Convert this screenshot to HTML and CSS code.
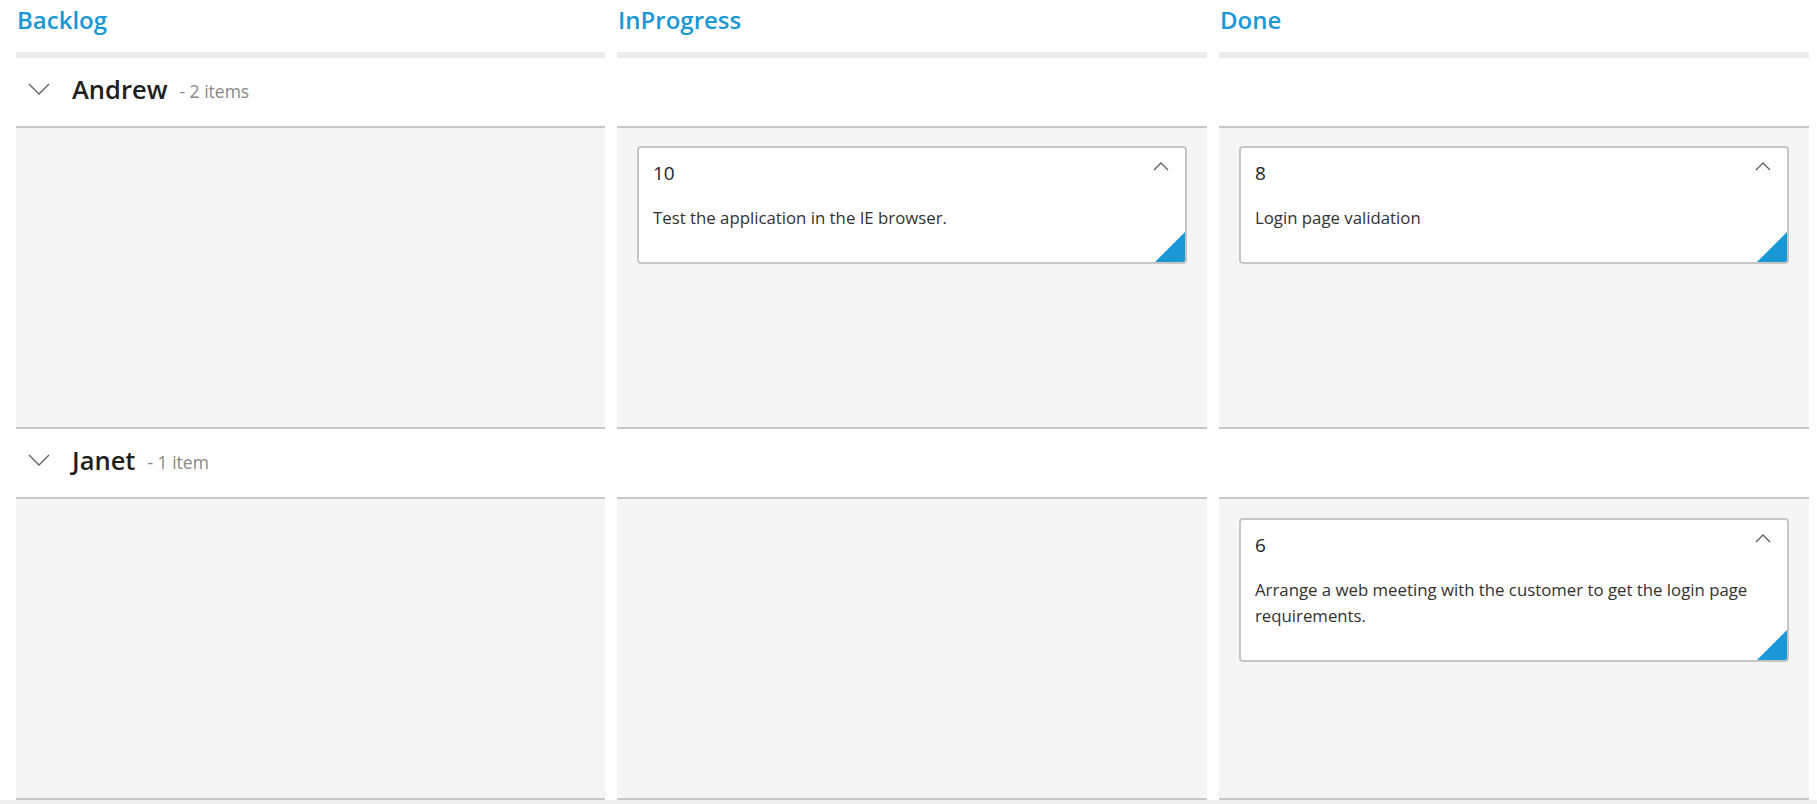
FILE: index.html
```html
<!DOCTYPE html>
<html>
<head>
<meta charset="utf-8">
<link rel="stylesheet" href="styles.css">
</head>
<body>
<div class="board">
  <div class="row col-headers">
    <div class="col-title">Backlog</div>
    <div class="col-title">InProgress</div>
    <div class="col-title">Done</div>
  </div>

  <div class="row lane-head">
    <div class="lane-cell lane-first">
      <svg class="lane-chevron" width="22" height="12" viewBox="0 0 22 12"><polyline points="1,1 11,11 21,1" fill="none" stroke="#605e5c" stroke-width="1.3"/></svg>
      <span class="lane-name">Andrew</span>
      <span class="lane-count">- 2 items</span>
    </div>
    <div class="lane-cell"></div>
    <div class="lane-cell"></div>
  </div>
  <div class="row lane-body body-1">
    <div class="body-cell"></div>
    <div class="body-cell">
      <div class="card">
        <div class="card-head">
          <span class="card-id">10</span>
          <svg class="card-chevron" width="16" height="9" viewBox="0 0 16 9"><polyline points="1,8 8,1 15,8" fill="none" stroke="#605e5c" stroke-width="1.3"/></svg>
        </div>
        <div class="card-text">Test the application in the IE browser.</div>
      </div>
    </div>
    <div class="body-cell">
      <div class="card">
        <div class="card-head">
          <span class="card-id">8</span>
          <svg class="card-chevron" width="16" height="9" viewBox="0 0 16 9"><polyline points="1,8 8,1 15,8" fill="none" stroke="#605e5c" stroke-width="1.3"/></svg>
        </div>
        <div class="card-text">Login page validation</div>
      </div>
    </div>
  </div>

  <div class="row lane-head">
    <div class="lane-cell lane-first">
      <svg class="lane-chevron" width="22" height="12" viewBox="0 0 22 12"><polyline points="1,1 11,11 21,1" fill="none" stroke="#605e5c" stroke-width="1.3"/></svg>
      <span class="lane-name">Janet</span>
      <span class="lane-count">- 1 item</span>
    </div>
    <div class="lane-cell"></div>
    <div class="lane-cell"></div>
  </div>
  <div class="row lane-body body-2">
    <div class="body-cell"></div>
    <div class="body-cell"></div>
    <div class="body-cell">
      <div class="card">
        <div class="card-head">
          <span class="card-id">6</span>
          <svg class="card-chevron" width="16" height="9" viewBox="0 0 16 9"><polyline points="1,8 8,1 15,8" fill="none" stroke="#605e5c" stroke-width="1.3"/></svg>
        </div>
        <div class="card-text">Arrange a web meeting with the customer to get the login page requirements.</div>
      </div>
    </div>
  </div>
</div>
<div class="bottom-strip"></div>
</body>
</html>
```
FILE: styles.css
```css
html, body {
  margin: 0;
  padding: 0;
  background: #ffffff;
  font-family: "Open Sans", "Noto Sans", sans-serif;
  color: #201f1e;
  overflow: hidden;
}
.board {
  padding-left: 16px;
}
.row {
  display: grid;
  grid-template-columns: 589px 590px 590px;
  column-gap: 12px;
}
.col-title {
  height: 52px;
  line-height: 40px;
  font-size: 24px;
  font-weight: 600;
  color: #1a97d5;
  padding-left: 1px;
  border-bottom: 6px solid #ececec;
  box-sizing: content-box;
}
.lane-cell {
  height: 68px;
  border-bottom: 2px solid #c8c8c8;
  background: #ffffff;
}
.lane-first {
  display: flex;
  align-items: center;
}
.lane-chevron {
  margin-left: 12px;
  margin-top: -6px;
  flex: none;
}
.lane-name {
  margin-left: 22px;
  font-size: 25.5px;
  font-weight: 550;
  color: #201f1e;
  margin-top: -7px;
}
.lane-count {
  margin-left: 12px;
  font-size: 17.5px;
  color: #8a8886;
  margin-top: -3px;
}
.body-cell {
  background: #f5f5f5;
  border-bottom: 2px solid #c8c8c8;
  padding: 18px 20px 0 20px;
  height: 281px;
}
.body-2 .body-cell {
  padding-top: 19px;
  height: 280px;
}
.card {
  position: relative;
  background: #ffffff;
  border: 2px solid #c6c6c6;
  border-radius: 4px;
  overflow: hidden;
  padding: 12px 16px 31px 14px;
}
.card::after {
  content: "";
  position: absolute;
  right: 0;
  bottom: 0;
  width: 30px;
  height: 30px;
  background: #1a97d5;
  clip-path: polygon(100% 0, 100% 100%, 0 100%);
}
.card-head {
  display: flex;
  justify-content: space-between;
  align-items: center;
  height: 26px;
}
.card-id {
  font-size: 19px;
  font-weight: 500;
  line-height: 26px;
  color: #201f1e;
}
.card-chevron {
  margin-top: -14px;
}
.card-text {
  margin-top: 19px;
  font-size: 16.8px;
  line-height: 26px;
  color: #323130;
}
.bottom-strip {
  height: 4px;
  background: #efefef;
}
```
